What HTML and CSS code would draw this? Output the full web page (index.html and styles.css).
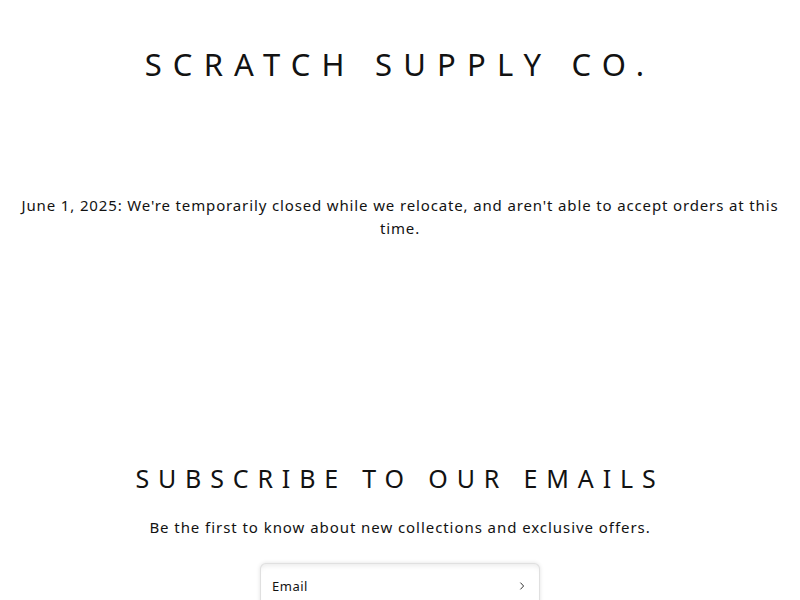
FILE: index.html
```html
<!DOCTYPE html>
<html lang="en">
<head>
<meta charset="utf-8">
<title>Scratch Supply Co.</title>
<link rel="stylesheet" href="styles.css">
</head>
<body>
<header class="site-header">
  <h1 class="site-title">SCRATCH SUPPLY CO.</h1>
</header>
<main class="announcement">
  <p class="announcement-text">June 1, 2025: We're temporarily closed while we relocate, and aren't able to accept orders at this time.</p>
</main>
<section class="newsletter">
  <h2 class="newsletter-title">SUBSCRIBE TO OUR EMAILS</h2>
  <p class="newsletter-text">Be the first to know about new collections and exclusive offers.</p>
  <form class="newsletter-form">
    <label class="email-field">
      <span class="email-label">Email</span>
      <svg class="email-arrow" width="10" height="10" viewBox="0 0 10 10" aria-hidden="true"><path d="M3.4 1.6 L6.6 5 L3.4 8.4" fill="none" stroke="#333" stroke-width="1"/></svg>
    </label>
  </form>
</section>
</body>
</html>
```

FILE: styles.css
```css
html, body {
  margin: 0;
  padding: 0;
  background: #ffffff;
}
body {
  font-family: "Noto Sans", "DejaVu Sans", sans-serif;
  color: #121212;
  width: 800px;
  height: 600px;
  overflow: hidden;
}
.site-header {
  display: flex;
  justify-content: center;
  padding-top: 44px;
}
.site-title {
  margin: 0;
  font-weight: 400;
  font-size: 31px;
  line-height: 40px;
  letter-spacing: 11.2px;
}
.announcement {
  padding: 110px 20px 0;
}
.announcement-text {
  margin: 0;
  text-align: center;
  font-size: 15px;
  line-height: 23px;
  letter-spacing: 0.86px;
}
.newsletter {
  display: flex;
  flex-direction: column;
  align-items: center;
  padding-top: 222px;
}
.newsletter-title {
  margin: 0;
  font-weight: 400;
  font-size: 25px;
  line-height: 32px;
  letter-spacing: 8.85px;
}
.newsletter-text {
  margin: 22px 0 0;
  font-size: 15px;
  line-height: 23px;
  letter-spacing: 0.94px;
}
.newsletter-form {
  margin-top: 24px;
}
.email-field {
  display: flex;
  align-items: center;
  justify-content: space-between;
  box-sizing: border-box;
  width: 280px;
  height: 45px;
  padding: 0 12px 0 11px;
  border: 1px solid rgba(0, 0, 0, 0.12);
  border-radius: 6px;
  background: #fff;
  box-shadow: 0 0 4px rgba(0, 0, 0, 0.12), inset 0 5px 5px -3px rgba(0, 0, 0, 0.08);
}
.email-label {
  font-size: 13px;
  letter-spacing: 0.04em;
  color: #121212;
}
.email-arrow {
  display: block;
}
```
